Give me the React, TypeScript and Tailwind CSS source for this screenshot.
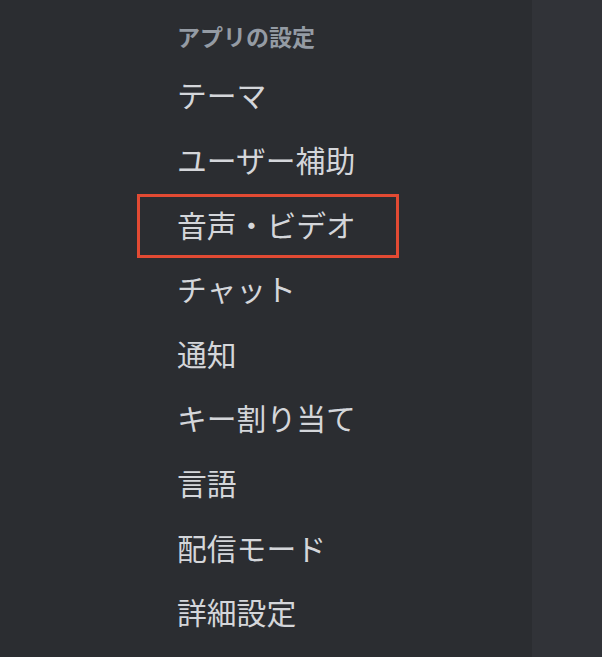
import React from 'react';

const items = ['テーマ', 'ユーザー補助', '音声・ビデオ', 'チャット', '通知', 'キー割り当て', '言語', '配信モード', '詳細設定'];

export default function App() {
  const selected = 2;

  return (
    <div className="flex h-[657px] w-full overflow-hidden" style={{ fontFamily: '"Noto Sans CJK JP", "Noto Sans", sans-serif' }}>
      <div className="w-[532px] bg-[#2b2d31] pl-[137px]">
        <div className="pt-[23px] pl-[40px] pb-[15.5px] text-[23px] leading-[26px] font-bold text-[#949ba4]">
          アプリの設定
        </div>
        <div className="flex flex-col">
          {items.map((item, i) => (
            <div
              key={item}
              className={`flex h-[64.6px] w-[262px] items-center border-[3px] pb-[4px] pl-[37px] text-[29.8px] text-[#d4d6da] ${
                i === selected ? 'border-[#e24a33]' : 'border-transparent'
              }`}
            >
              {item}
            </div>
          ))}
        </div>
      </div>
      <div className="flex-1 bg-[#313338]" />
    </div>
  );
}
